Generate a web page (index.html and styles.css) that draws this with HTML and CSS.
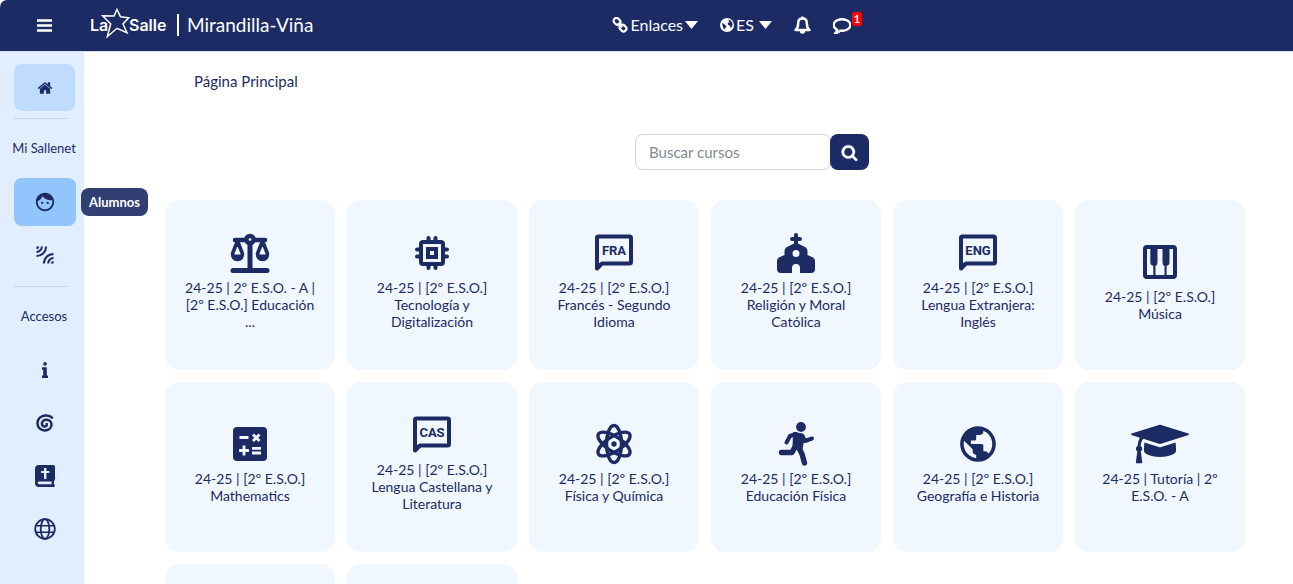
FILE: index.html
```html
<!DOCTYPE html>
<html lang="es">
<head>
<meta charset="utf-8">
<meta name="viewport" content="width=device-width, initial-scale=1">
<title>La Salle Mirandilla-Viña</title>
<link rel="stylesheet" href="styles.css">
</head>
<body>
<header class="topbar">
  <div class="brand">
    <button class="icon-btn menu-btn" type="button" aria-label="Menú">
      <svg width="15" height="13" viewBox="0 0 15 13"><path d="M0 1.500h15M0 6.500h15M0 11.500h15" stroke="currentColor" stroke-width="2.600"/></svg>
    </button>
    <a class="brand-link" href="#">
      <svg class="logo" width="78" height="34" viewBox="0 0 78 34" role="img" aria-label="La Salle">
        <text class="logo-text" x="-1" y="23">La</text>
        <text class="logo-text" x="38" y="23">Salle</text>
        <path d="M26 1.500l3.500 7.200 8.200 1-5.700 6.300 4 8.700-10-4.400-9.700 8.400 3.400-12.700-8-8.300 11.300.3z" fill="#1c2b64" stroke="#fff" stroke-width="1.500"/>
      </svg>
      <span class="divider"></span>
      <span class="school">Mirandilla-Viña</span>
    </a>
  </div>
  <nav class="topnav">
    <button class="drop" type="button">
      <svg width="16" height="16" viewBox="0 0 16 16" fill="none" stroke="currentColor" stroke-width="2.200"><rect x="1.400" y="1.600" width="7.200" height="5.600" rx="2.700" transform="rotate(45 5 4.400)"/><rect x="7.400" y="8.200" width="7.200" height="5.600" rx="2.700" transform="rotate(45 11 11)"/><path d="M6 6l4.200 4.200"/></svg>
      Enlaces
      <svg class="caret" width="13" height="8" viewBox="0 0 13 8"><path d="M0 0h13L6.500 8z" fill="currentColor"/></svg>
    </button>
    <button class="drop drop-lang" type="button">
      <svg width="14" height="14" viewBox="0 0 14 14"><circle cx="7" cy="7" r="7" fill="currentColor"/><path d="M8.300 1.600l2.200.6 1.700 2.200.4 2.200-1 2.600-1.300.6-.3-2-1.500-.5-.9-1.500.7-1.400 1.300-.5-.8-.8zM2 5.200l2.200.8 1 1.300 1.300.5-.4 1.400-1.200 1-.3 1.500-1.500-1.700-.5-2.200z" fill="#1c2b64"/></svg>
      ES
      <svg class="caret" width="13" height="8" viewBox="0 0 13 8"><path d="M0 0h13L6.500 8z" fill="currentColor"/></svg>
    </button>
    <button class="icon-btn" type="button" aria-label="Notificaciones">
      <svg width="17" height="18" viewBox="0 0 17 18"><path d="M8.500 2.500c-3 0-4.300 2.200-4.300 4.500 0 3.500-.8 5.500-2.700 7h14c-1.900-1.500-2.700-3.500-2.700-7 0-2.300-1.300-4.500-4.300-4.500z" fill="none" stroke="currentColor" stroke-width="2.500" stroke-linejoin="round"/><path d="M8.500.5v2" stroke="currentColor" stroke-width="2.200"/><path d="M5.800 15h5.400a2.700 2.700 0 0 1-5.400 0z" fill="currentColor"/></svg>
    </button>
    <button class="icon-btn chat-btn" type="button" aria-label="Mensajes">
      <svg width="18" height="18" viewBox="0 0 1792 1792"><path fill="currentColor" stroke="currentColor" stroke-width="110" d="M896 384q-204 0-381.500 69.500t-282 187.500-104.500 255q0 112 71.500 213.500t201.500 175.500l87 50-27 96q-24 91-70 172 152-63 275-171l43-38 57 6q69 8 130 8 204 0 381.500-69.500t282-187.500 104.500-255-104.500-255-282-187.500-381.500-69.500zm896 512q0 174-120 321.500t-326 233-450 85.500q-70 0-145-8-198 175-460 242-49 14-114 22h-5q-15 0-27-10.500t-16-27.500v-1q-3-4-.5-12t2-10 4.500-9.500l6-9 7-8.500 8-9q7-8 31-34.500t34.500-38 31-39.500 32.500-51 27-59 26-76q-157-89-247.500-220t-90.500-281q0-174 120-321.500t326-233 450-85.500 450 85.500 326 233 120 321.500z"/></svg>
      <span class="badge">1</span>
    </button>
  </nav>
</header>

<div class="shell">
  <nav class="sidebar">
    <a class="side-item side-home" href="#" aria-label="Inicio">
      <svg width="16" height="16" viewBox="0 0 1792 1792"><path fill="currentColor" d="M1472 992v480q0 26-19 45t-45 19h-384v-384h-256v384h-384q-26 0-45-19t-19-45v-480q0-1 .5-3t.5-3l575-474 575 474q1 2 1 6zm223-69l-62 74q-8 9-21 11h-3q-13 0-21-7l-692-577-692 577q-12 8-24 7-13-2-21-11l-62-74q-8-10-7-23.500t11-21.500l719-599q32-26 76-26t76 26l244 204v-195q0-14 9-23t23-9h192q14 0 23 9t9 23v408l219 182q10 8 11 21.500t-7 23.500z"/></svg>
    </a>
    <hr class="side-rule">
    <h2 class="side-title">Mi Sallenet</h2>
    <div class="side-group">
      <a class="side-item side-active" href="#">
        <svg width="22" height="22" viewBox="0 0 24 24" aria-hidden="true"><path fill="currentColor" d="M9 11.750a1.250 1.250 0 1 0 0 2.500 1.250 1.250 0 0 0 0-2.500zm6 0a1.250 1.250 0 1 0 0 2.500 1.250 1.250 0 0 0 0-2.500zM12 2C6.480 2 2 6.480 2 12s4.480 10 10 10 10-4.480 10-10S17.520 2 12 2zm0 18c-4.410 0-8-3.590-8-8 0-.29.020-.58.050-.86 2.360-1.050 4.230-2.980 5.210-5.370C11.070 8.330 14.050 10 17.420 10c.78 0 1.530-.09 2.250-.26.210.71.330 1.470.330 2.260 0 4.410-3.590 8-8 8z"/></svg>
        <span class="tooltip">Alumnos</span>
      </a>
      <a class="side-item" href="#" aria-label="Conexiones">
        <svg width="18" height="18" viewBox="0 0 18 18" fill="none" stroke="currentColor" stroke-width="2"><path d="M.5 10.100A9.600 9.600 0 0 0 10.100.5M.5 5.900A5.400 5.400 0 0 0 5.900.5M7.900 17.500a9.600 9.600 0 0 1 9.600-9.600M12.100 17.500a5.400 5.400 0 0 1 5.400-5.400"/><path d="M.5.500h2.600a2.600 2.600 0 0 1-2.600 2.600zM17.500 17.500h-2.600a2.600 2.600 0 0 1 2.600-2.600z" fill="currentColor" stroke="none"/></svg>
      </a>
    </div>
    <hr class="side-rule">
    <h2 class="side-title">Accesos</h2>
    <div class="side-group">
      <a class="side-item" href="#" aria-label="Información">
        <svg width="6" height="16" viewBox="0 0 6 16"><circle cx="3" cy="1.900" r="1.800" fill="currentColor"/><path fill="currentColor" d="M0 5.200h4.800v8.300H6V16H0v-2.500h1.200V7.700H0z"/></svg>
      </a>
      <a class="side-item" href="#" aria-label="Espiral">
        <svg width="18" height="18" viewBox="0 0 18 18"><path d="M16 3.600C14.500 1.900 11.800 1.200 9 1.500 4.700 2 1.500 5 1.500 9.200c0 4.300 3.200 7.300 7.200 7.300 4 0 6.800-2.600 6.800-5.900 0-3-2.200-4.800-5-4.800-2.700 0-4.600 1.600-4.600 3.800 0 1.800 1.200 2.900 2.700 2.900 1.700 0 2.400-1.100 2.100-2.500" fill="none" stroke="currentColor" stroke-width="2.500" stroke-linecap="round"/></svg>
      </a>
      <a class="side-item" href="#" aria-label="Pastoral">
        <svg width="20" height="22" viewBox="0 0 20 22"><path fill="currentColor" fill-rule="evenodd" d="M4 0h14.500q1.500 0 1.500 1.500v13q0 1-1 1.400v3.700q1 .4 1 1.200t-1 1.200H4q-4 0-4-4V4q0-4 4-4zM9 3v3H6v2h3v6h2.400V8h3V6h-3V3zM4 16.500q-1.300 0-1.300 1.300T4 19.200h12.600v-2.700z"/></svg>
      </a>
      <a class="side-item" href="#" aria-label="Web">
        <svg width="22" height="22" viewBox="0 0 22 22" fill="none" stroke="currentColor" stroke-width="1.800"><circle cx="11" cy="11" r="9.800"/><ellipse cx="11" cy="11" rx="4.300" ry="9.800"/><path d="M2 7.700h18M2 14.300h18" stroke-width="1.500"/></svg>
      </a>
    </div>
  </nav>

  <main class="main">
    <nav class="crumbs"><a href="#">Página Principal</a></nav>
    <form class="search">
      <input class="search-input" type="text" placeholder="Buscar cursos" aria-label="Buscar cursos">
      <button class="search-btn" type="button" aria-label="Buscar">
        <svg width="17" height="17" viewBox="0 0 1792 1792"><path fill="currentColor" stroke="currentColor" stroke-width="40" d="M1216 832q0-185-131.500-316.500t-316.500-131.500-316.500 131.500-131.500 316.500 131.500 316.500 316.500 131.500 316.500-131.500 131.500-316.500zm512 832q0 52-38 90t-90 38q-54 0-90-38l-343-342q-179 124-399 124-143 0-273.500-55.500t-225-150-150-225-55.500-273.500 55.500-273.500 150-225 225-150 273.500-55.500 273.500 55.500 225 150 150 225 55.500 273.500q0 220-124 399l343 343q37 37 37 90z"/></svg>
      </button>
    </form>

    <div class="courses">
      <a class="card" href="#">
        <svg class="card-icon" viewBox="0 0 50 50"><path d="M8 42.500h34" stroke="currentColor" stroke-width="5" stroke-linecap="round"/><path d="M25 14v28" stroke="currentColor" stroke-width="5"/><path d="M10 12h30" stroke="currentColor" stroke-width="4.500" stroke-linecap="round"/><circle cx="25" cy="11.500" r="3.600" fill="#f0f7ff" stroke="currentColor" stroke-width="4.500"/><path d="M12.500 13L7.600 25.500c0 4.800 2.200 6 4.900 6s4.900-1.200 4.900-6zM37.500 13l-4.900 12.500c0 4.800 2.200 6 4.900 6s4.900-1.200 4.900-6z" fill="none" stroke="currentColor" stroke-width="3.600" stroke-linejoin="round"/><path d="M7 26.500h11q-.5 5.500-5.500 5.500T7 26.500zM32 26.500h11q-.5 5.500-5.500 5.500T32 26.500z" fill="currentColor"/></svg>
        <span class="card-name">24-25 | 2º E.S.O. - A | [2º E.S.O.] Educación ...</span>
      </a>
      <a class="card" href="#">
        <svg class="card-icon" viewBox="0 0 50 50" fill="none" stroke="currentColor" stroke-width="4"><rect x="14" y="14" width="22" height="22" rx="2"/><rect x="21" y="21" width="8" height="8"/><path d="M21.500 13V10M28.500 13V10M21.500 40v-3M28.500 40v-3M13 21.500h-3M13 28.500h-3M40 21.500h-3M40 28.500h-3" stroke-linecap="round"/></svg>
        <span class="card-name">24-25 | [2º E.S.O.] Tecnología y Digitalización</span>
      </a>
      <a class="card" href="#">
        <svg class="card-icon" viewBox="0 0 50 50"><path d="M8 8.500v32l5-5h27.500q1.500 0 1.500-1.500V10q0-1.500-1.500-1.500h-31q-1.500 0-1.500 1.500" fill="none" stroke="currentColor" stroke-width="4" stroke-linejoin="round"/><path d="M8 35h6l-6 6z" fill="currentColor"/><text class="bubble-text" x="25" y="27" text-anchor="middle">FRA</text></svg>
        <span class="card-name">24-25 | [2º E.S.O.] Francés - Segundo Idioma</span>
      </a>
      <a class="card" href="#">
        <svg class="card-icon" viewBox="0 0 50 50"><path d="M25 7v9M21 11h8" stroke="currentColor" stroke-width="4" stroke-linecap="round"/><path fill="currentColor" fill-rule="evenodd" d="M25 14.500l8.500 4.200q3 1.500 3 4.500v3.800l4.500 2q3 1.400 3 4.500V41q0 4-4 4H29v-5q0-4-4-4t-4 4v5H10q-4 0-4-4v-7.500q0-3.100 3-4.500l4.500-2v-3.800q0-3 3-4.500zM25 22a3.500 3.500 0 1 0 0 7 3.500 3.500 0 0 0 0-7z"/></svg>
        <span class="card-name">24-25 | [2º E.S.O.] Religión y Moral Católica</span>
      </a>
      <a class="card" href="#">
        <svg class="card-icon" viewBox="0 0 50 50"><path d="M8 8.500v32l5-5h27.500q1.500 0 1.500-1.500V10q0-1.500-1.500-1.500h-31q-1.500 0-1.500 1.500" fill="none" stroke="currentColor" stroke-width="4" stroke-linejoin="round"/><path d="M8 35h6l-6 6z" fill="currentColor"/><text class="bubble-text" x="25" y="27" text-anchor="middle">ENG</text></svg>
        <span class="card-name">24-25 | [2º E.S.O.] Lengua Extranjera: Inglés</span>
      </a>
      <a class="card" href="#">
        <svg class="card-icon" viewBox="0 0 50 50"><path fill="currentColor" fill-rule="evenodd" d="M12 8h26q4 0 4 4v26q0 4-4 4H12q-4 0-4-4V12q0-4 4-4zM12 12v26h6.300v-9.200q-3-.3-3-3.300V12zM22.500 12v13.500q0 3-2 3.300V38h9v-9.200q-2-.3-2-3.300V12zM34.500 12v13.500q0 3-2.900 3.300V38H38V12z"/></svg>
        <span class="card-name">24-25 | [2º E.S.O.] Música</span>
      </a>
      <a class="card" href="#">
        <svg class="card-icon" viewBox="0 0 50 50"><rect x="8" y="8" width="34" height="34" rx="4" fill="currentColor"/><path d="M14.500 18.500h9M28 15.500l6.500 6.500M34.500 15.500L28 22M14 31.500h10M19 26.500v10M27 29.300h9M27 34h9" stroke="#f0f7ff" stroke-width="2.800"/></svg>
        <span class="card-name">24-25 | [2º E.S.O.] Mathematics</span>
      </a>
      <a class="card" href="#">
        <svg class="card-icon" viewBox="0 0 50 50"><path d="M8 8.500v32l5-5h27.500q1.500 0 1.500-1.500V10q0-1.500-1.500-1.500h-31q-1.500 0-1.500 1.500" fill="none" stroke="currentColor" stroke-width="4" stroke-linejoin="round"/><path d="M8 35h6l-6 6z" fill="currentColor"/><text class="bubble-text" x="25" y="27" text-anchor="middle">CAS</text></svg>
        <span class="card-name">24-25 | [2º E.S.O.] Lengua Castellana y Literatura</span>
      </a>
      <a class="card" href="#">
        <svg class="card-icon" viewBox="0 0 50 50" fill="none" stroke="currentColor" stroke-width="3.400"><ellipse cx="25" cy="25" rx="7.500" ry="18.500"/><ellipse cx="25" cy="25" rx="7.500" ry="18.500" transform="rotate(57 25 25)"/><ellipse cx="25" cy="25" rx="7.500" ry="18.500" transform="rotate(-57 25 25)"/><circle cx="25" cy="25" r="2.700" fill="currentColor" stroke="none"/></svg>
        <span class="card-name">24-25 | [2º E.S.O.] Física y Química</span>
      </a>
      <a class="card" href="#">
        <svg class="card-icon" viewBox="0 0 50 50"><path d="M3 3h44v44H3z" fill="#f2f6fd"/><circle cx="30" cy="8" r="4.900" fill="currentColor"/><path d="M23 14l8 1.500 2 2-2.500 12.500-8-1.500z" fill="currentColor" stroke="currentColor" stroke-width="2" stroke-linejoin="round"/><path d="M25 15l-6 2-3.500 6.500M31 16.500l3 5.500 7-2.500" fill="none" stroke="currentColor" stroke-width="4" stroke-linecap="round" stroke-linejoin="round"/><path d="M24.500 27l-3.500 6.500H10.500M27.500 28l3.500 7 2.500 9" fill="none" stroke="currentColor" stroke-width="5.400" stroke-linecap="round" stroke-linejoin="round"/></svg>
        <span class="card-name">24-25 | [2º E.S.O.] Educación Física</span>
      </a>
      <a class="card" href="#">
        <svg class="card-icon" viewBox="-2 -2 28 28"><path fill="currentColor" d="M12 2C6.480 2 2 6.480 2 12s4.480 10 10 10 10-4.480 10-10S17.520 2 12 2zm-1 17.930c-3.950-.49-7-3.850-7-7.930 0-.62.080-1.210.210-1.790L9 15v1c0 1.100.9 2 2 2v1.930zm6.900-2.540c-.26-.81-1-1.390-1.900-1.390h-1v-3c0-.55-.45-1-1-1H8v-2h2c.55 0 1-.45 1-1V7h2c1.100 0 2-.9 2-2v-.41c2.930 1.190 5 4.060 5 7.410 0 2.080-.8 3.970-2.100 5.390z"/></svg>
        <span class="card-name">24-25 | [2º E.S.O.] Geografía e Historia</span>
      </a>
      <a class="card" href="#">
        <svg class="card-icon card-icon-wide" viewBox="0 0 2304 1792"><path fill="currentColor" d="M1774 836l18 316q4 69-82 128t-235 93.500-323 34.500-323-34.500-235-93.500-82-128l18-316 574 181q22 7 48 7t48-7zm530-324q0 23-22 31l-1120 352q-4 1-10 1t-10-1l-652-206q-43 34-71 111.500t-34 178.500q63 36 63 109 0 69-58 107l58 433q2 14-8 25-9 11-24 11h-192q-15 0-24-11-10-11-8-25l58-433q-58-38-58-107 0-73 65-111 11-207 98-330l-333-104q-22-8-22-31t22-31l1120-352q4-1 10-1t10 1l1120 352q22 8 22 31z"/></svg>
        <span class="card-name">24-25 | Tutoría | 2º E.S.O. - A</span>
      </a>
      <div class="card"></div>
      <div class="card"></div>
    </div>
  </main>
</div>
</body>
</html>
```
FILE: styles.css
```css
:root {
  --navy: #1c2b64;
  --card: #f0f7ff;
}

* {
  box-sizing: border-box;
}

body {
  margin: 0;
  height: 100vh;
  display: flex;
  flex-direction: column;
  background: #fff;
  color: var(--navy);
  font-family: Lato, sans-serif;
  font-size: 14px;
}

a {
  color: inherit;
  text-decoration: none;
}

button {
  border: 0;
  padding: 0;
  background: none;
  color: inherit;
  font: inherit;
}

svg {
  display: block;
  flex: none;
}

/* Top bar */
.topbar {
  flex: none;
  display: grid;
  grid-template-columns: 9fr 10fr;
  align-items: center;
  height: 52px;
  padding-bottom: 1px;
  background: var(--navy);
  border-bottom: 1px solid #d5def0;
  border-top-left-radius: 7px;
  color: #fff;
}

.brand,
.brand-link,
.topnav,
.drop {
  display: flex;
  align-items: center;
}

.brand {
  gap: 39px;
  padding-left: 37px;
}

.brand-link {
  gap: 8px;
}

.logo-text {
  fill: #fff;
  font-family: Inter, sans-serif;
  font-size: 16px;
  font-weight: 600;
}

.divider {
  width: 2px;
  height: 22px;
  background: #fff;
}

.school {
  font-size: 19px;
  line-height: 24px;
}

.topnav {
  gap: 22px;
}

.drop {
  gap: 2px;
  font-size: 16px;
  line-height: 20px;
}

.drop-lang .caret {
  margin-left: 3px;
}

.chat-btn {
  position: relative;
}

.badge {
  position: absolute;
  left: 19px;
  top: -4px;
  width: 10px;
  border-radius: 2px;
  background: #f00;
  font-size: 11px;
  font-weight: 700;
  line-height: 14px;
  text-align: center;
}

/* Page body */
.shell {
  flex: 1;
  min-height: 0;
  display: flex;
}

.sidebar {
  flex: none;
  width: 84px;
  padding: 12px 8px 0 14px;
  background: #e0eeff;
}

.side-item {
  position: relative;
  display: flex;
  align-items: center;
  justify-content: center;
  width: 62px;
  height: 48px;
  border-radius: 8px;
}

.side-home {
  width: 61px;
  height: 47px;
  background: #bfdbfe;
}

.side-active {
  background: #93c5fd;
}

.side-group {
  display: flex;
  flex-direction: column;
  gap: 5px;
}

.side-rule {
  width: 55px;
  height: 1px;
  margin: 7px 0 0;
  border: 0;
  background: #bfdbfe;
}

.side-title {
  display: flex;
  justify-content: center;
  width: 60px;
  margin: 0;
  font-size: 13px;
  font-weight: 400;
  line-height: 59px;
  white-space: nowrap;
}

.tooltip {
  position: absolute;
  left: 67px;
  top: 10px;
  padding: 0 8px;
  border-radius: 8px;
  background: #323f73;
  color: #fff;
  font-size: 13px;
  font-weight: 700;
  line-height: 28px;
}

.main {
  flex: 1;
  min-width: 0;
  padding: 19px 48px 20px 81px;
  overflow-y: auto;
  scrollbar-width: none;
}

.crumbs {
  padding-left: 29px;
  font-size: 15px;
  line-height: 20px;
}

.search {
  display: flex;
  justify-content: center;
  padding: 43px 0 30px 94px;
}

.search-input {
  width: 196px;
  height: 36px;
  padding: 0 13px;
  border: 1px solid #ced4da;
  border-radius: 8px;
  color: var(--navy);
  font: 15px Lato, sans-serif;
}

.search-input::placeholder {
  color: #838c94;
}

.search-btn {
  display: flex;
  align-items: center;
  justify-content: center;
  width: 39px;
  height: 36px;
  margin-left: -1px;
  border-radius: 8px;
  background: var(--navy);
  color: #fff;
}

/* Course grid */
.courses {
  display: grid;
  grid-template-columns: repeat(6, 1fr);
  gap: 12px;
}

.card {
  display: flex;
  flex-direction: column;
  align-items: center;
  justify-content: center;
  gap: 1px;
  aspect-ratio: 1;
  padding: 0 16px 12px;
  border-radius: 14px;
  background: var(--card);
  text-align: center;
}

.card-icon {
  width: 50px;
  height: 50px;
}

.card-icon-wide {
  width: 58px;
}

.card-name {
  font-size: 14px;
  line-height: 17px;
}

.bubble-text {
  fill: currentColor;
  font-family: "Liberation Sans Narrow", Roboto, sans-serif;
  font-size: 13px;
  font-weight: 700;
}
```
